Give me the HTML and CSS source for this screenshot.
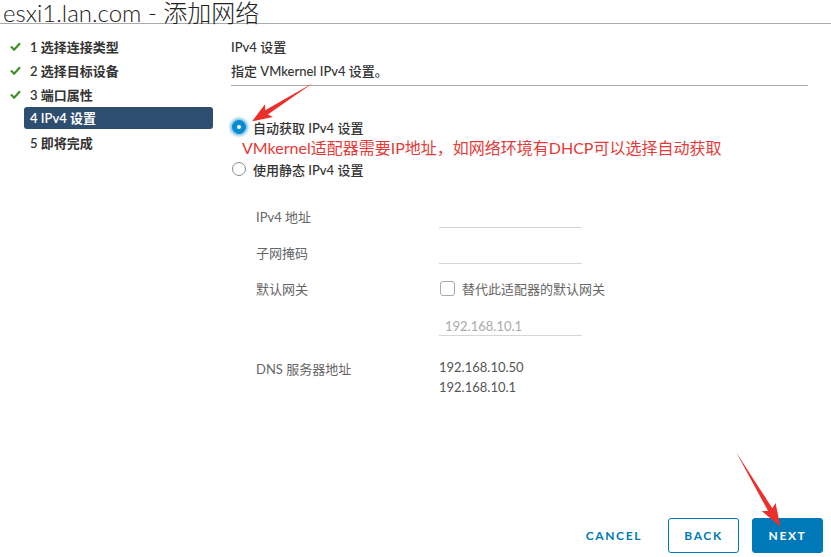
FILE: index.html
```html
<!DOCTYPE html>
<html>
<head>
    <meta charset="utf-8">
    <link rel="stylesheet" href="styles.css">
    <title>添加网络</title>
</head>
<body>
<div class="page">
    <h1 class="title">esxi1.lan.com - 添加网络</h1>

    <div class="wizard">
        <ul class="steps">
            <li class="step done"><svg class="check" viewBox="0 0 12 10"><polyline points="1,5 4.5,8.5 11,1.5"/></svg><span>1 选择连接类型</span></li>
            <li class="step done"><svg class="check" viewBox="0 0 12 10"><polyline points="1,5 4.5,8.5 11,1.5"/></svg><span>2 选择目标设备</span></li>
            <li class="step done"><svg class="check" viewBox="0 0 12 10"><polyline points="1,5 4.5,8.5 11,1.5"/></svg><span>3 端口属性</span></li>
            <li class="step current"><span>4 IPv4 设置</span></li>
            <li class="step"><span>5 即将完成</span></li>
        </ul>

        <div class="content">
            <div class="heading">IPv4 设置</div>
            <div class="subheading">指定 VMkernel IPv4 设置。</div>

            <label class="radio-row">
                <span class="radio checked"></span>自动获取 IPv4 设置
            </label>
            <div class="note">VMkernel适配器需要IP地址，如网络环境有DHCP可以选择自动获取</div>
            <label class="radio-row">
                <span class="radio"></span>使用静态 IPv4 设置
            </label>

            <div class="form">
                <div class="form-row">
                    <span class="label">IPv4 地址</span>
                    <span class="input"></span>
                </div>
                <div class="form-row">
                    <span class="label">子网掩码</span>
                    <span class="input"></span>
                </div>
                <div class="form-row">
                    <span class="label">默认网关</span>
                    <span class="checkbox"></span><span class="check-label">替代此适配器的默认网关</span>
                </div>
                <div class="form-row">
                    <span class="label"></span>
                    <span class="input placeholder">192.168.10.1</span>
                </div>
                <div class="form-row dns">
                    <span class="label">DNS 服务器地址</span>
                    <span class="values">192.168.10.50<br>192.168.10.1</span>
                </div>
            </div>
        </div>
    </div>

    <div class="footer">
        <button class="btn link" type="button">CANCEL</button>
        <button class="btn outline" type="button">BACK</button>
        <button class="btn primary" type="button">NEXT</button>
    </div>

    <!-- red annotation arrows -->
    <svg class="arrows" width="831" height="557">
        <polygon transform="translate(313,83) rotate(147.8)" points="0,0 55,-2.5 52,-7.5 72,0 52,7.5 55,2.5"/>
        <polygon transform="translate(736,452) rotate(59.3)" points="0,0 67,-2.5 64,-8 87,0 64,8 67,2.5"/>
    </svg>
</div>
</body>
</html>
```

FILE: styles.css
```css
body {
    margin: 0;
    background: #fff;
    font-family: Lato, "Noto Sans CJK SC", sans-serif;
    color: #333;
}
.page {
    position: relative;
    width: 831px;
    height: 557px;
    display: flex;
    flex-direction: column;
    overflow: hidden;
}
.title {
    margin: 0;
    padding-left: 3px;
    font-size: 24px;
    font-weight: 300;
    line-height: 25px;
    height: 23px;
    color: #222;
    border-bottom: 1px solid #aaa;
}
.wizard {
    display: flex;
}
.steps {
    list-style: none;
    margin: 0;
    padding: 11px 0 0 0;
    width: 213px;
}
.step {
    display: flex;
    align-items: center;
    height: 22px;
    margin-bottom: 2px;
    padding-left: 24px;
    font-size: 13px;
    font-weight: 600;
    color: #333;
    position: relative;
}
.step span {
    padding-left: 6px;
}
.step .check {
    position: absolute;
    left: 10px;
    top: 7px;
    width: 11px;
    height: 9px;
    fill: none;
    stroke: #3c8d1a;
    stroke-width: 2.4;
}
.step.current span {
    flex: 1;
    background: #2e4e70;
    color: #fff;
    line-height: 22px;
    border-radius: 3px;
}
.content {
    flex: 1;
    padding: 13px 23px 0 18px;
    font-size: 13px;
}
.heading,
.subheading {
    line-height: 20px;
    color: #333;
    font-weight: 500;
}
.heading {
    margin-bottom: 4px;
}
.subheading {
    padding-bottom: 4px;
    border-bottom: 1px solid #aaa;
}
.radio-row {
    display: flex;
    align-items: center;
    height: 20px;
    font-weight: 500;
    color: #333;
}
.radio-row:first-of-type {
    margin-top: 31px;
}
.radio {
    width: 12px;
    height: 12px;
    border: 1px solid #8c8c8c;
    border-radius: 50%;
    margin: 0 7px 0 1px;
    box-sizing: content-box;
}
.radio.checked {
    background: #0a8bd0;
    border-color: #0a8bd0;
    box-shadow: 0 0 3px 2px rgba(10, 139, 208, 0.55);
    position: relative;
}
.radio.checked::after {
    content: "";
    position: absolute;
    left: 4px;
    top: 4px;
    width: 4px;
    height: 4px;
    border-radius: 50%;
    background: #fff;
}
.note {
    margin-left: 11px;
    font-size: 16px;
    line-height: 22px;
    color: #e53a37;
}
.form {
    margin: 25px 0 0 25px;
}
.form-row {
    display: flex;
    align-items: center;
    height: 24px;
    margin-bottom: 12px;
}
.label {
    width: 183px;
    color: #666;
}
.input {
    width: 143px;
    height: 23px;
    border-bottom: 1px solid #d5d5d5;
    line-height: 26px;
    padding-left: 6px;
    box-sizing: border-box;
}
.placeholder {
    color: #aaa;
}
.checkbox {
    width: 13px;
    height: 13px;
    border: 1px solid #aaa;
    border-radius: 3px;
    margin: 0 7px 0 1px;
}
.check-label {
    color: #666;
}
.form-row.dns {
    align-items: flex-start;
    height: auto;
    margin-top: 21px;
}
.dns .label {
    padding-top: 2px;
}
.values {
    line-height: 20px;
    color: #555;
}
.footer {
    margin-top: auto;
    display: flex;
    justify-content: flex-end;
    align-items: center;
    padding: 0 8px 4px 0;
}
.btn {
    height: 35px;
    font-family: Lato, sans-serif;
    font-size: 12px;
    font-weight: 700;
    letter-spacing: 1.6px;
    border-radius: 3px;
    cursor: pointer;
}
.btn.link {
    background: none;
    border: none;
    color: #0079b8;
    padding: 0 12px;
    margin-right: 14px;
}
.btn.outline {
    width: 71px;
    background: #fff;
    border: 1px solid #0079b8;
    color: #0079b8;
    margin-right: 13px;
}
.btn.primary {
    width: 71px;
    background: #0079b8;
    border: 1px solid #0079b8;
    color: #fff;
}
.arrows {
    position: absolute;
    left: 0;
    top: 0;
    fill: #ec2f2b;
    pointer-events: none;
}
```
